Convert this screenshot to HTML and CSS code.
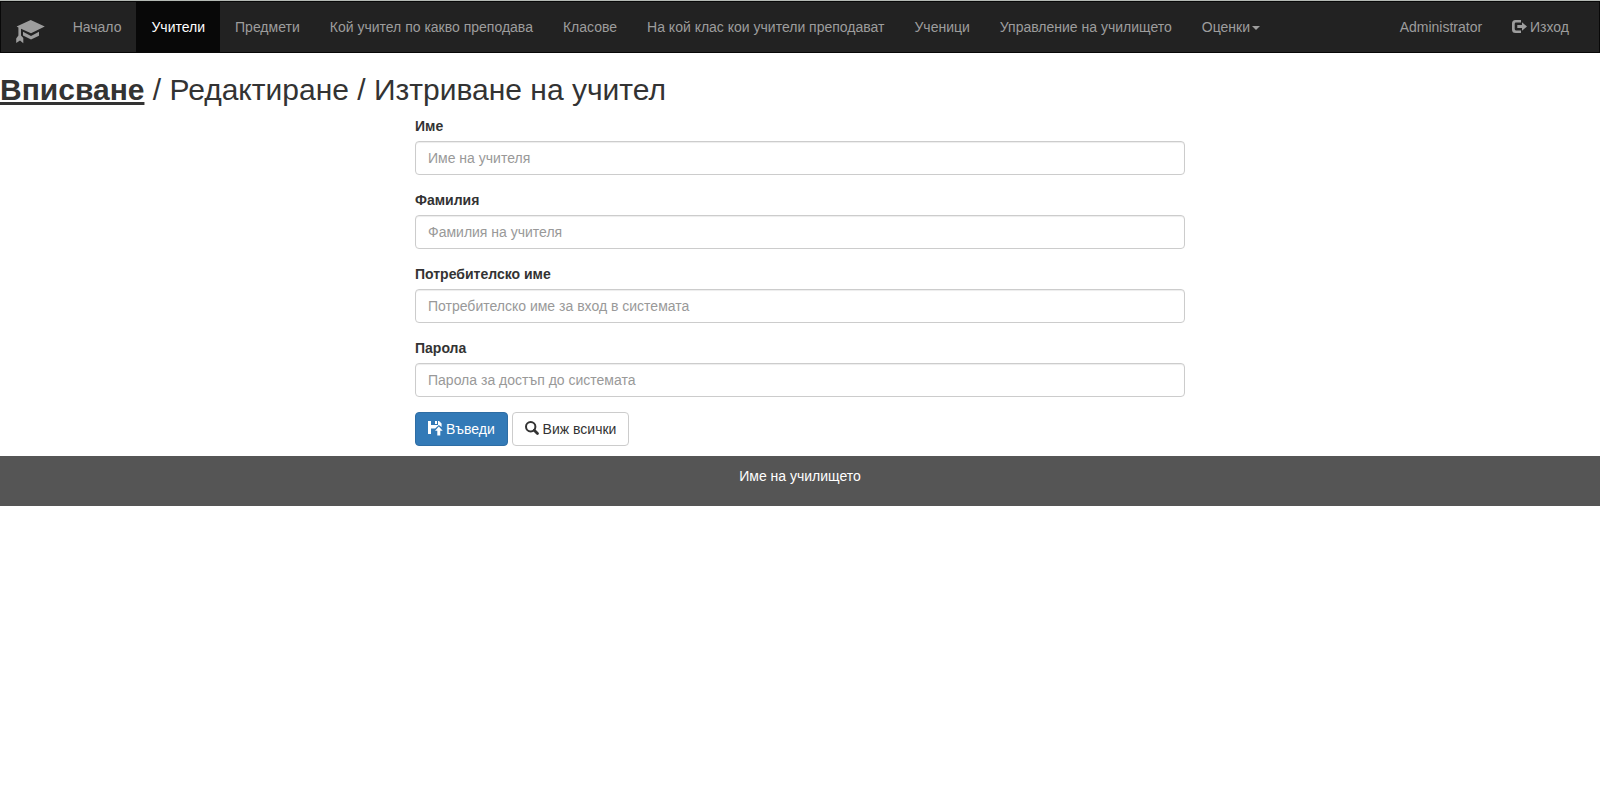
FILE: index.html
```html
<!DOCTYPE html>
<html lang="bg">
<head>
<meta charset="utf-8">
<title>Учители</title>
<link rel="stylesheet" href="styles.css">
</head>
<body>
<nav class="navbar">
  <a class="brand" href="#"><svg class="cap" viewBox="0 0 29 24"><path d="M.6 6.5 14.7 0 28.8 6.5 15 13.2 5 8.800V15.500L7.300 18V23.300L4 20.600.2 23V18.500L2.400 15.500V7.600z"/><path d="M7 11.800 15 16 23 11.800v4L15 19.600 7 15.600z"/></svg></a>
  <ul class="nav">
    <li><a href="#">Начало</a></li>
    <li><a class="active" href="#">Учители</a></li>
    <li><a href="#">Предмети</a></li>
    <li><a href="#">Кой учител по какво преподава</a></li>
    <li><a href="#">Класове</a></li>
    <li><a href="#">На кой клас кои учители преподават</a></li>
    <li><a href="#">Ученици</a></li>
    <li><a href="#">Управление на училището</a></li>
    <li><a href="#">Оценки<span class="caret"></span></a></li>
  </ul>
  <ul class="nav nav-right">
    <li><a href="#">Administrator</a></li>
    <li><a href="#"><svg class="icon" viewBox="0 0 14 14"><path d="M9 0H3.5Q0 0 0 3.5v6Q0 13 3.5 13H9v-2.6H4Q2.7 10.4 2.7 9.1V4Q2.7 2.6 4 2.6H9z"/><path d="M10 2.3 15 6.5 10 10.7V8H5.3V5H10z"/></svg> Изход</a></li>
  </ul>
</nav>
<h2 class="title"><b class="current">Вписване</b> / Редактиране / Изтриване на учител</h2>
<form class="form">
  <div class="group"><label class="label" for="first">Име</label><input class="field" id="first" placeholder="Име на учителя"></div>
  <div class="group"><label class="label" for="last">Фамилия</label><input class="field" id="last" placeholder="Фамилия на учителя"></div>
  <div class="group"><label class="label" for="user">Потребителско име</label><input class="field" id="user" placeholder="Потребителско име за вход в системата"></div>
  <div class="group"><label class="label" for="pass">Парола</label><input class="field" id="pass" type="password" placeholder="Парола за достъп до системата"></div>
  <div class="actions">
    <button class="btn primary" type="button"><svg class="icon" viewBox="0 0 14 14"><path d="M0 0h3v4h7V0H11l2.600 2.600V6L10.800 3.900 7.200 7.500H3V13H0z"/><path d="M7 0h2v3H7zM10.800 5.400 14.700 9.700h-2.400V14.500H9.300V9.700H7z"/></svg> Въведи</button>
    <button class="btn" type="button"><svg class="icon" viewBox="0 0 14 14"><circle cx="5.7" cy="5.7" r="4.7" fill="none" stroke="currentColor" stroke-width="2"/><path d="M9.2 9.2 12.5 12.5" stroke="currentColor" stroke-width="2.8" stroke-linecap="round"/></svg> Виж всички</button>
  </div>
</form>
<footer class="footer">Име на училището</footer>
</body>
</html>
```
FILE: styles.css
```css
* { box-sizing: border-box; }
body { margin: 0; border-top: 1px solid #b4b9b4; background: #fff; color: #333; font: 14px/20px "Liberation Sans", Arial, sans-serif; }
.navbar { display: flex; height: 52px; padding-right: 15px; background: #222; border: 1px solid #080808; }
.brand { width: 56.7px; padding: 18px 0 0 15px; color: #9d9d9d; }
.cap { display: block; width: 29px; height: 24px; fill: currentColor; }
.nav { display: flex; margin: 0; padding: 0; list-style: none; }
.nav a { display: block; padding: 15px; height: 50px; color: #9d9d9d; text-decoration: none; white-space: nowrap; }
.nav .active { color: #fff; background: #080808; }
.nav-right { margin-left: auto; }
.caret { display: inline-block; margin-left: 2px; vertical-align: middle; border-top: 4px solid; border-left: 4px solid transparent; border-right: 4px solid transparent; }
.title { margin: 20px 0 10px; font-size: 30px; line-height: 33px; font-weight: 500; }
.current { text-decoration: underline; }
.form { width: 770px; margin: 0 auto; }
.group { margin-bottom: 15px; }
.label { display: block; margin-bottom: 5px; font-weight: bold; }
.field { display: block; width: 100%; height: 34px; padding: 6px 12px; font: inherit; color: #555; background: #fff; border: 1px solid #ccc; border-radius: 4px; box-shadow: inset 0 1px 1px rgba(0, 0, 0, .075); }
.field::placeholder { color: #999; opacity: 1; }
.actions { display: flex; gap: 4px; margin-bottom: 10px; }
.btn { height: 34px; padding: 6px 12px; font: inherit; color: #333; background: #fff; border: 1px solid #ccc; border-radius: 4px; white-space: nowrap; }
.primary { color: #fff; background: #337ab7; border-color: #2e6da4; }
.icon { display: inline-block; width: 14px; height: 14px; vertical-align: -2px; fill: currentColor; overflow: visible; }
.btn .icon { vertical-align: -1px; }
.footer { height: 50px; padding: 10px; color: #fff; background: #555; text-align: center; }
```
